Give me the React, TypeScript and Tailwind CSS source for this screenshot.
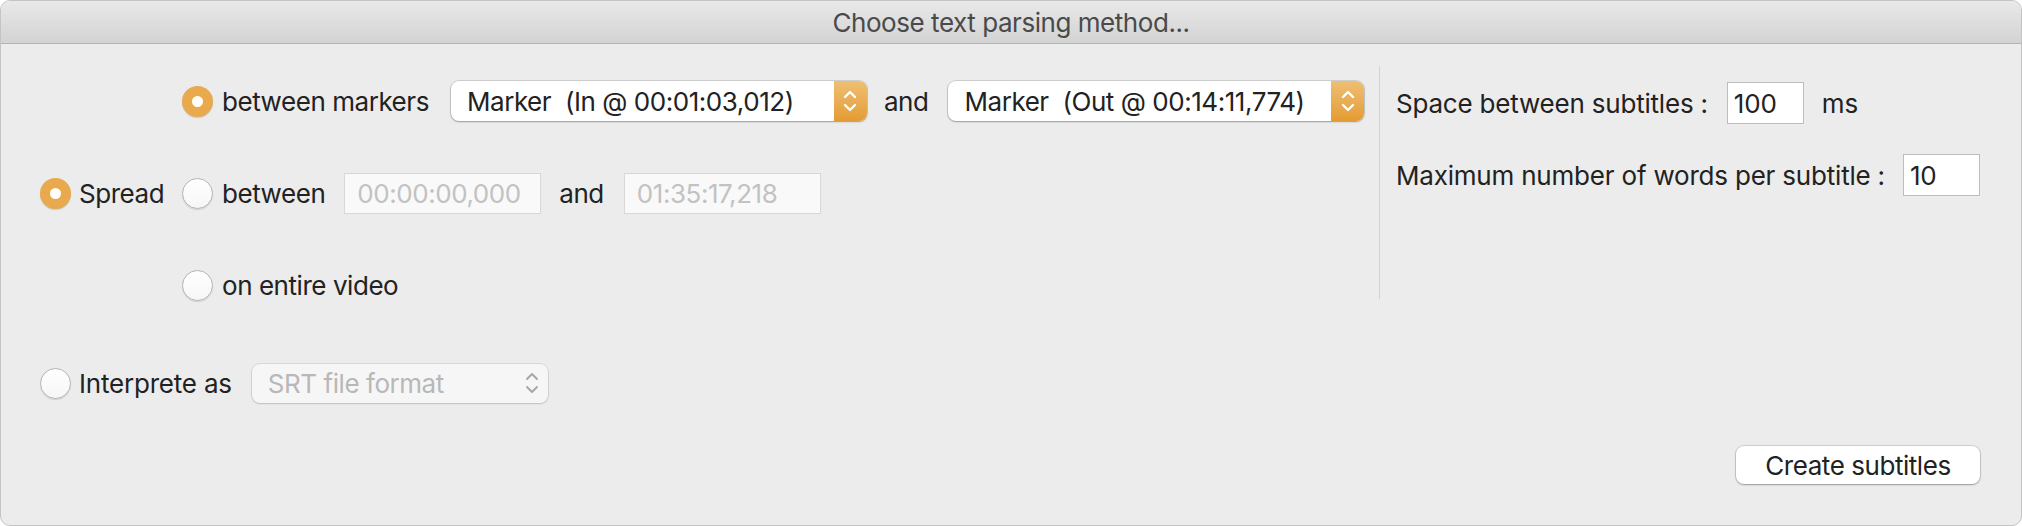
import React from "react";

const font = { fontFamily: "Inter, 'Liberation Sans', sans-serif", letterSpacing: "-0.45px" };

function Radio({ checked }: { checked?: boolean }) {
  if (checked) {
    return (
      <div className="w-[31px] h-[31px] shrink-0 rounded-full bg-[#e8aa4c] shadow-[0_1px_1px_rgba(0,0,0,0.15)] flex items-center justify-center">
        <div className="w-[11px] h-[11px] rounded-full bg-white" />
      </div>
    );
  }
  return (
    <div className="w-[31px] h-[31px] shrink-0 rounded-full bg-gradient-to-b from-[#ffffff] to-[#f6f6f6] border border-[#b5b5b5] shadow-[0_1px_1px_rgba(0,0,0,0.12)]" />
  );
}

function Stepper() {
  return (
    <div className="w-[33px] h-full shrink-0 rounded-r-[8px] bg-gradient-to-b from-[#eebf72] to-[#e49c30] flex items-center justify-center">
      <svg width="16" height="28" viewBox="0 0 16 28" fill="none">
        <path d="M3 10 L8 5 L13 10" stroke="white" strokeWidth="2.4" strokeLinecap="round" strokeLinejoin="round" />
        <path d="M3 18 L8 23 L13 18" stroke="white" strokeWidth="2.4" strokeLinecap="round" strokeLinejoin="round" />
      </svg>
    </div>
  );
}

function Popup({ label }: { label: string }) {
  return (
    <div className="w-[416px] h-[40px] shrink-0 rounded-[8px] bg-white flex items-stretch shadow-[0_0_0_1px_rgba(0,0,0,0.12),0_1px_2px_rgba(0,0,0,0.25)]">
      <div className="flex-1 pl-[16px] flex items-center text-[26px] text-[#222] whitespace-pre">{label}</div>
      <Stepper />
    </div>
  );
}

function DisabledField({ value }: { value: string }) {
  return (
    <div className="w-[197px] h-[41px] shrink-0 bg-[#f9f9f9] border border-[#d8d8d8] flex items-center pl-[12px] text-[26px] text-[#c2c2c2]">
      {value}
    </div>
  );
}

function Field({ value }: { value: string }) {
  return (
    <div className="w-[77px] h-[42px] shrink-0 bg-white border border-[#bdbdbd] flex items-center pl-[6px] text-[26px] text-[#222]">
      {value}
    </div>
  );
}

export default function App() {
  return (
    <div className="w-[2022px] h-[526px] bg-white" style={font}>
      <div className="w-full h-full rounded-[10px] border border-[#c4c4c4] overflow-hidden flex flex-col bg-[#ececec] text-[#222]">
        {/* Title bar */}
        <div className="h-[43px] shrink-0 bg-gradient-to-b from-[#e9e9e9] to-[#d3d3d3] border-b border-[#b3b3b3] flex items-center justify-center text-[26px] text-[#4a4a4a]">
          Choose text parsing method...
        </div>

        {/* Body */}
        <div className="flex-1 flex flex-col">
          <div className="flex items-start mt-[27px]">
            {/* Left */}
            <div className="w-[1378px] shrink-0 pl-[39px] flex items-center">
              <div className="w-[142px] shrink-0 flex items-center gap-[8px]">
                <Radio checked />
                <span className="text-[26px]">Spread</span>
              </div>
              <div className="flex flex-col gap-[32px]">
                <div className="h-[60px] flex items-center">
                  <Radio checked />
                  <span className="ml-[9px] text-[26px]">between markers</span>
                  <div className="ml-[22px]">
                    <Popup label="Marker  (In @ 00:01:03,012)" />
                  </div>
                  <span className="ml-[17px] mr-[20px] text-[26px]">and</span>
                  <Popup label="Marker  (Out @ 00:14:11,774)" />
                </div>
                <div className="h-[60px] flex items-center">
                  <Radio />
                  <span className="ml-[9px] text-[26px]">between</span>
                  <div className="ml-[19px]">
                    <DisabledField value="00:00:00,000" />
                  </div>
                  <span className="ml-[18px] mr-[20px] text-[26px]">and</span>
                  <DisabledField value="01:35:17,218" />
                </div>
                <div className="h-[60px] flex items-center">
                  <Radio />
                  <span className="ml-[9px] text-[26px]">on entire video</span>
                </div>
              </div>
            </div>

            {/* Divider */}
            <div className="w-px h-[233px] -mt-[5px] bg-[#d2d2d2] shrink-0" />

            {/* Right */}
            <div className="pl-[16px] flex flex-col pt-[11px] gap-[30px] tracking-[-0.2px]">
              <div className="flex items-center">
                <span className="text-[26px]">Space between subtitles :</span>
                <div className="ml-[19px]">
                  <Field value="100" />
                </div>
                <span className="ml-[18px] text-[26px]">ms</span>
              </div>
              <div className="flex items-center">
                <span className="text-[26px]">Maximum number of words per subtitle :</span>
                <div className="ml-[18px]">
                  <Field value="10" />
                </div>
              </div>
            </div>
          </div>

          {/* Interprete row */}
          <div className="h-[60px] mt-[38px] pl-[39px] flex items-center">
            <Radio />
            <span className="ml-[8px] text-[26px] tracking-[-0.2px]">Interprete as</span>
            <div className="ml-[20px] w-[296px] h-[39px] rounded-[8px] bg-[#f6f6f6] shadow-[0_0_0_1px_rgba(0,0,0,0.08),0_1px_2px_rgba(0,0,0,0.12)] flex items-center justify-between pl-[16px] pr-[8px] text-[26px] text-[#b8b8b8]">
              <span>SRT file format</span>
              <svg width="16" height="28" viewBox="0 0 16 28" fill="none">
                <path d="M3 10 L8 5 L13 10" stroke="#a8a8a8" strokeWidth="2" strokeLinecap="round" strokeLinejoin="round" />
                <path d="M3 18 L8 23 L13 18" stroke="#a8a8a8" strokeWidth="2" strokeLinecap="round" strokeLinejoin="round" />
              </svg>
            </div>
          </div>

          {/* Button row */}
          <div className="mt-[33px] flex justify-end pr-[41px]">
            <div className="w-[244px] h-[38px] rounded-[8px] bg-white shadow-[0_0_0_1px_rgba(0,0,0,0.12),0_1px_2px_rgba(0,0,0,0.25)] flex items-center justify-center text-[26px] text-[#222]">
              Create subtitles
            </div>
          </div>
        </div>
      </div>
    </div>
  );
}
